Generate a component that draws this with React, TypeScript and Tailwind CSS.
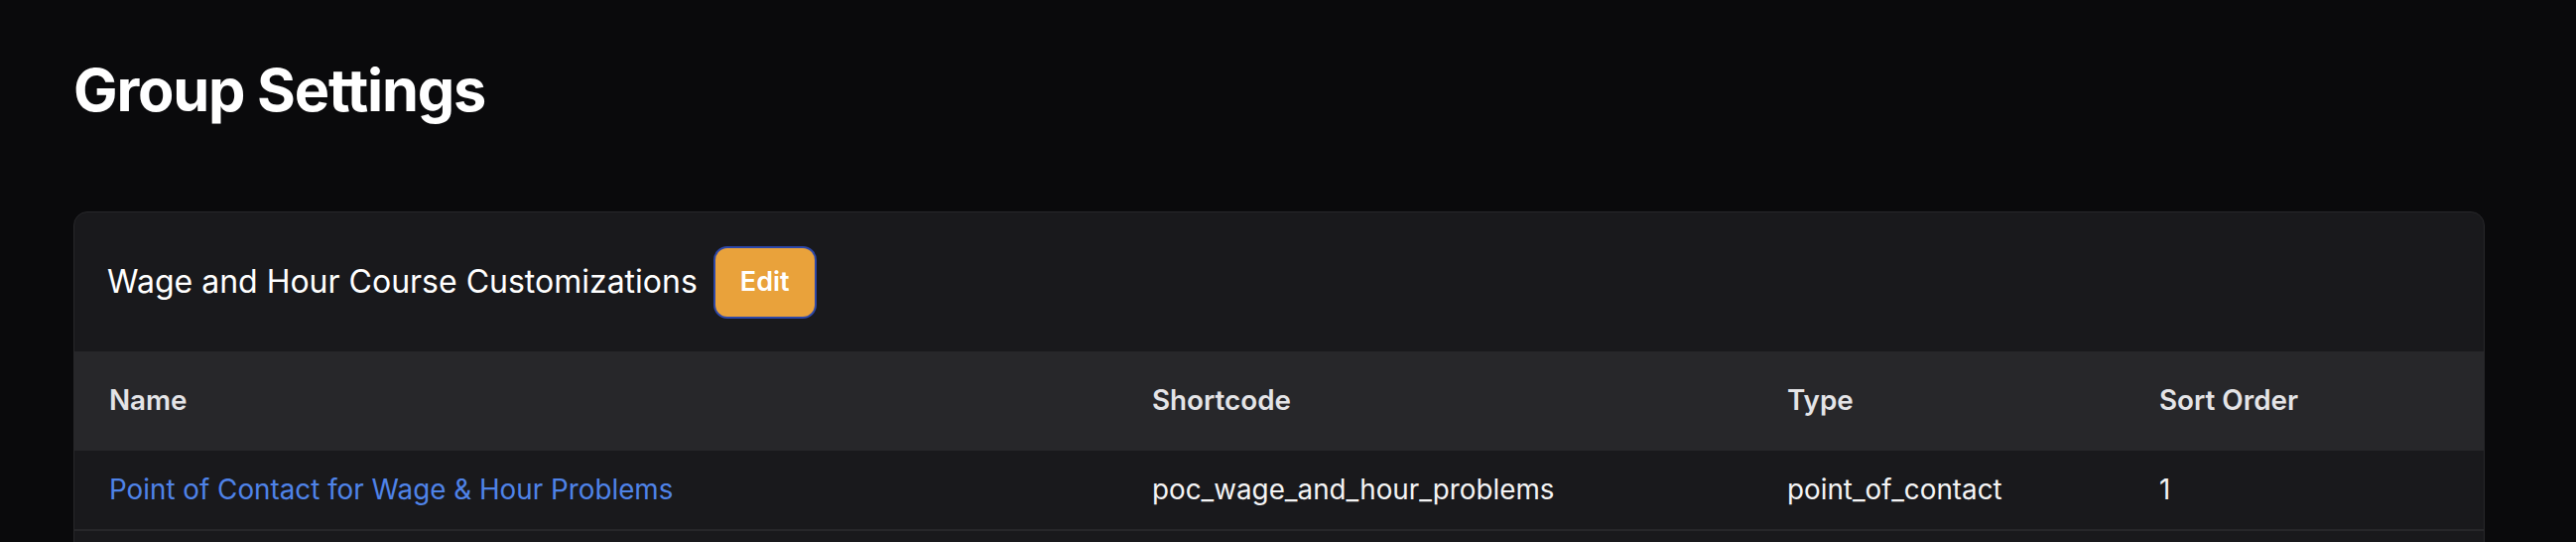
export default function App() {
  const rows = [
    {
      name: "Point of Contact for Wage & Hour Problems",
      shortcode: "poc_wage_and_hour_problems",
      type: "point_of_contact",
      sort: "1",
    },
    { name: "", shortcode: "", type: "", sort: "" },
  ];

  return (
    <div className="min-h-screen bg-[#0a0a0c] font-['Inter',sans-serif] text-white pl-[74px] pr-[92px] pt-[57px]">
      <h1 className="text-[59.4px] leading-[66px] font-bold tracking-[-0.02em]">Group Settings</h1>

      {/* Customizations card */}
      <div className="mt-[90px] rounded-[14px] border-[1.5px] border-[#27272a] bg-[#19191c] overflow-hidden">
        <div className="flex items-center gap-[16px] px-[33px] h-[140px]">
          <h2 className="text-[32px] leading-[42px] font-normal">Wage and Hour Course Customizations</h2>
          <button className="h-[73px] px-[25px] rounded-[14px] bg-[#e9a23b] border-2 border-[#2d47a8] text-[27px] font-semibold">
            Edit
          </button>
        </div>

        <table className="w-full table-fixed border-collapse text-left text-[27.8px]">
          <colgroup>
            <col className="w-[1051px]" />
            <col className="w-[640px]" />
            <col className="w-[375px]" />
            <col />
          </colgroup>
          <thead className="bg-[#27272a]">
            <tr className="h-[100px]">
              <th className="pl-[35px] font-semibold text-[#e4e4e7]">Name</th>
              <th className="pl-[35px] font-semibold text-[#e4e4e7]">Shortcode</th>
              <th className="pl-[35px] font-semibold text-[#e4e4e7]">Type</th>
              <th className="pl-[35px] font-semibold text-[#e4e4e7]">Sort Order</th>
            </tr>
          </thead>
          <tbody>
            {rows.map((r, i) => (
              <tr key={i} className="h-[80px] border-b-2 border-[#27272a]">
                <td className="pl-[35px] text-[#4f83e8]">{r.name}</td>
                <td className="pl-[35px] text-[#f4f4f5]">{r.shortcode}</td>
                <td className="pl-[35px] text-[#f4f4f5]">{r.type}</td>
                <td className="pl-[35px] text-[#f4f4f5]">{r.sort}</td>
              </tr>
            ))}
          </tbody>
        </table>
      </div>
    </div>
  );
}
